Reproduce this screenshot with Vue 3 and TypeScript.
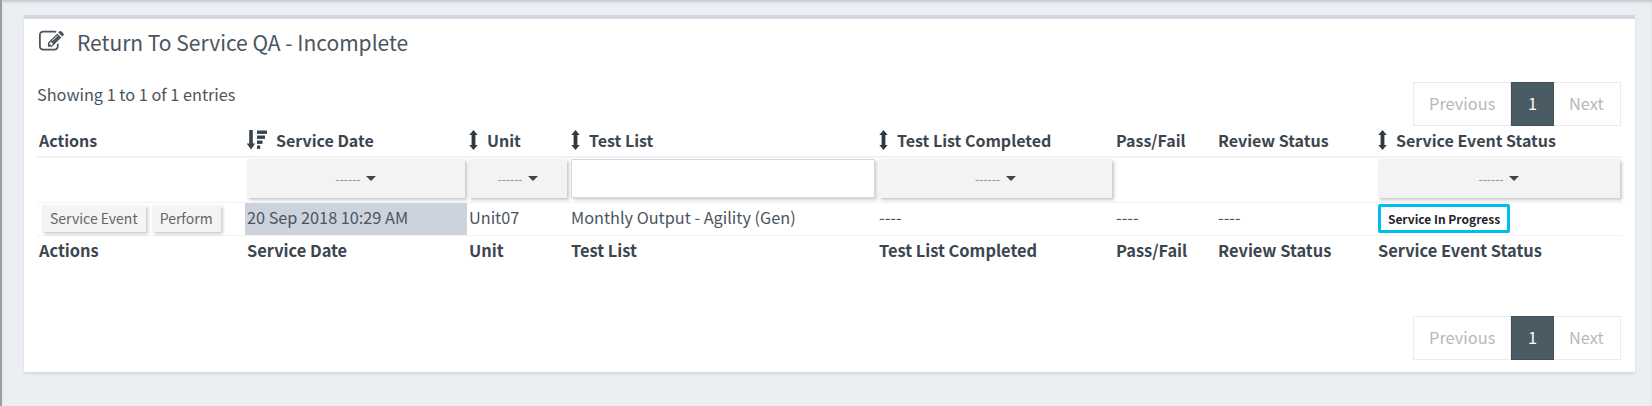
<script setup lang="ts">
const columns = [
  { label: "Actions", width: 208, sort: "" },
  { label: "Service Date", width: 222, sort: "desc", filter: "select" },
  { label: "Unit", width: 102, sort: "both", filter: "select" },
  { label: "Test List", width: 308, sort: "both", filter: "input" },
  { label: "Test List Completed", width: 237, sort: "both", filter: "select" },
  { label: "Pass/Fail", width: 102, sort: "" },
  { label: "Review Status", width: 160, sort: "" },
  { label: "Service Event Status", width: 246, sort: "both", filter: "select" },
];
const pages = ["Previous", "1", "Next"];
</script>

<template>
  <div class="page">
    <section class="panel">
      <h3 class="title">
        <svg class="title-icon" viewBox="0 0 1792 1792" aria-hidden="true">
          <path d="M888 1184l116-116-152-152-116 116v56h96v96h56zm440-720q-16-16-33 1l-350 350q-17 17-1 33t33-1l350-350q17-17 1-33zm80 594v190q0 119-84.5 203.5t-203.5 84.5h-832q-119 0-203.5-84.5t-84.5-203.5v-832q0-119 84.5-203.5t203.5-84.5h832q63 0 117 25 15 7 18 23 3 17-9 29l-49 49q-14 14-32 8-23-6-45-6h-832q-66 0-113 47t-47 113v832q0 66 47 113t113 47h832q66 0 113-47t47-113v-126q0-13 9-22l64-64q15-15 35-7t20 29zm-96-738l288 288-672 672h-288v-288zm444 132l-92 92-288-288 92-92q28-28 68-28t68 28l152 152q28 28 28 68t-28 68z" />
        </svg>
        Return To Service QA - Incomplete
      </h3>

      <div class="info-row">
        <span class="info">Showing 1 to 1 of 1 entries</span>
        <nav class="pager">
          <span v-for="p in pages" :key="p" :class="['page-item', { active: p === '1' }]">{{ p }}</span>
        </nav>
      </div>

      <table>
        <colgroup>
          <col v-for="c in columns" :key="c.label" :style="{ width: c.width + 'px' }" />
        </colgroup>
        <thead>
          <tr class="head-row">
            <th v-for="c in columns" :key="c.label">
              <span class="th-inner">
                <svg v-if="c.sort === 'desc'" class="sort-desc" viewBox="0 0 20 20" aria-hidden="true">
                  <path d="M2.2 0h3.6v13.6h2.4l-4.2 6-4.2-6h2.4z" />
                  <rect x="10" y="0.5" width="10" height="3.4" />
                  <rect x="10" y="5.5" width="8" height="3.4" />
                  <rect x="10" y="10.5" width="5.5" height="3.4" />
                  <rect x="10" y="15.5" width="3.2" height="3.4" />
                </svg>
                <svg v-else-if="c.sort === 'both'" class="sort-both" viewBox="0 0 9 20" aria-hidden="true">
                  <path d="M4.5 0l4.2 5H6.4V15h2.3l-4.2 5-4.2-5h2.3V5H.3z" />
                </svg>
                {{ c.label }}
              </span>
            </th>
          </tr>
          <tr class="filter-row">
            <td v-for="c in columns" :key="c.label">
              <div v-if="c.filter === 'select'" class="filter-select">
                <span class="dashes">------</span><span class="caret"></span>
              </div>
              <div v-else-if="c.filter === 'input'" class="filter-input"></div>
            </td>
          </tr>
        </thead>
        <tbody>
          <tr class="data-row">
            <td class="flush">
              <div class="actions">
                <span class="btn">Service Event</span>
                <span class="btn">Perform</span>
              </div>
            </td>
            <td class="sorted">20 Sep 2018 10:29 AM</td>
            <td>Unit07</td>
            <td>Monthly Output - Agility (Gen)</td>
            <td>----</td>
            <td>----</td>
            <td>----</td>
            <td class="flush"><span class="badge">Service In Progress</span></td>
          </tr>
        </tbody>
        <tfoot>
          <tr class="foot-row">
            <th v-for="c in columns" :key="c.label">{{ c.label }}</th>
          </tr>
        </tfoot>
      </table>

      <div class="bottom-row">
        <nav class="pager">
          <span v-for="p in pages" :key="p" :class="['page-item', { active: p === '1' }]">{{ p }}</span>
        </nav>
      </div>
    </section>
  </div>
</template>

<style>
body {
  margin: 0;
  background: #ebeef3;
}
</style>

<style scoped>
.page {
  box-sizing: border-box;
  width: 1652px;
  height: 406px;
  padding: 15px 17px 0 22px;
  background: #ebeef3;
  border-left: 2px solid #9a9da1;
  box-shadow: inset 0 3px 3px -1px #c3c7cc;
  font-family: "Noto Sans CJK SC", "Source Sans Pro", "Open Sans", sans-serif;
  color: #4a5560;
}

.panel {
  box-sizing: border-box;
  height: 357px;
  padding: 0 13px;
  background: #fff;
  border-top: 4px solid #d3d9e0;
  box-shadow: 0 2px 2px rgba(60, 70, 85, 0.12);
}

.title {
  display: flex;
  align-items: center;
  gap: 13px;
  height: 46px;
  margin: 0;
  padding-left: 2px;
  font-size: 21px;
  font-weight: 400;
  line-height: 46px;
}

.title-icon {
  width: 25px;
  height: 25px;
  margin-top: -1px;
  fill: #4a5560;
}

.info-row {
  display: flex;
  justify-content: space-between;
  height: 61px;
  padding-top: 17px;
  box-sizing: border-box;
}

.info {
  font-size: 16.3px;
  line-height: 24px;
}

.pager {
  display: flex;
  height: 44px;
  margin-right: 1px;
  font-size: 16.4px;
  line-height: 41px;
  color: #b8b8b8;
}

.page-item {
  box-sizing: border-box;
  padding: 0 15px;
  border: 1px solid #ececec;
  border-left-width: 0;
  background: #fff;
}

.page-item:first-child {
  border-left-width: 1px;
  width: 98px;
}

.page-item.active {
  width: 43px;
  padding: 0;
  text-align: center;
  color: #fff;
  background: #4b5b64;
  border-color: #43525a;
  border-width: 1px;
}

.page-item:last-child {
  width: 67px;
}

table {
  width: 1585px;
  table-layout: fixed;
  border-collapse: collapse;
  font-size: 16.25px;
}

th,
td {
  padding: 0 2px 3px;
  text-align: left;
  white-space: nowrap;
}

th {
  font-weight: 600;
  color: #3b4650;
}

.head-row {
  height: 31px;
  border-bottom: 2px solid #f1f2f4;
}

.head-row th {
  font-size: 16px;
  padding-bottom: 2px;
}

.th-inner {
  display: flex;
  align-items: center;
  gap: 9px;
}

.sort-desc {
  width: 20px;
  height: 20px;
  fill: #39434c;
}

.sort-both {
  width: 9px;
  height: 20px;
  fill: #2f3942;
}

.filter-row {
  height: 45px;
  border-bottom: 1px solid #f1f2f4;
}

.filter-select {
  display: flex;
  align-items: center;
  justify-content: center;
  gap: 5px;
  height: 39px;
  background: #f3f3f3;
  box-shadow: 2px 2px 3px rgba(0, 0, 0, 0.22);
}

.dashes {
  font-size: 12px;
  color: #8a8a8a;
}

.caret {
  width: 0;
  height: 0;
  margin-left: 1px;
  border-left: 5px solid transparent;
  border-right: 5px solid transparent;
  border-top: 5px solid #444;
}

.filter-input {
  box-sizing: border-box;
  height: 39px;
  background: #fff;
  border: 1px solid #d5d8e2;
  box-shadow: 2px 2px 3px rgba(0, 0, 0, 0.18);
}

.data-row {
  height: 33px;
  border-bottom: 1px solid #f1f2f4;
}

.data-row .flush {
  padding-bottom: 0;
}

.sorted {
  background: #cdd3dc;
}

.actions {
  display: flex;
  gap: 6px;
  padding-left: 3px;
}

.btn {
  box-sizing: border-box;
  height: 27px;
  padding: 0 8px;
  font-size: 14px;
  line-height: 26px;
  color: #666;
  background: #f4f4f4;
  box-shadow: 2px 2px 3px rgba(0, 0, 0, 0.2);
}

.badge {
  display: block;
  box-sizing: border-box;
  width: 132px;
  height: 29px;
  font-size: 12px;
  font-weight: 600;
  line-height: 24px;
  text-align: center;
  color: #1f2428;
  background: #fff;
  border: 3px solid #00bfef;
  border-radius: 2px;
}

.foot-row {
  height: 32px;
}

.foot-row th {
  font-size: 16.4px;
}

.bottom-row {
  display: flex;
  justify-content: flex-end;
  margin-top: 49px;
}
</style>
